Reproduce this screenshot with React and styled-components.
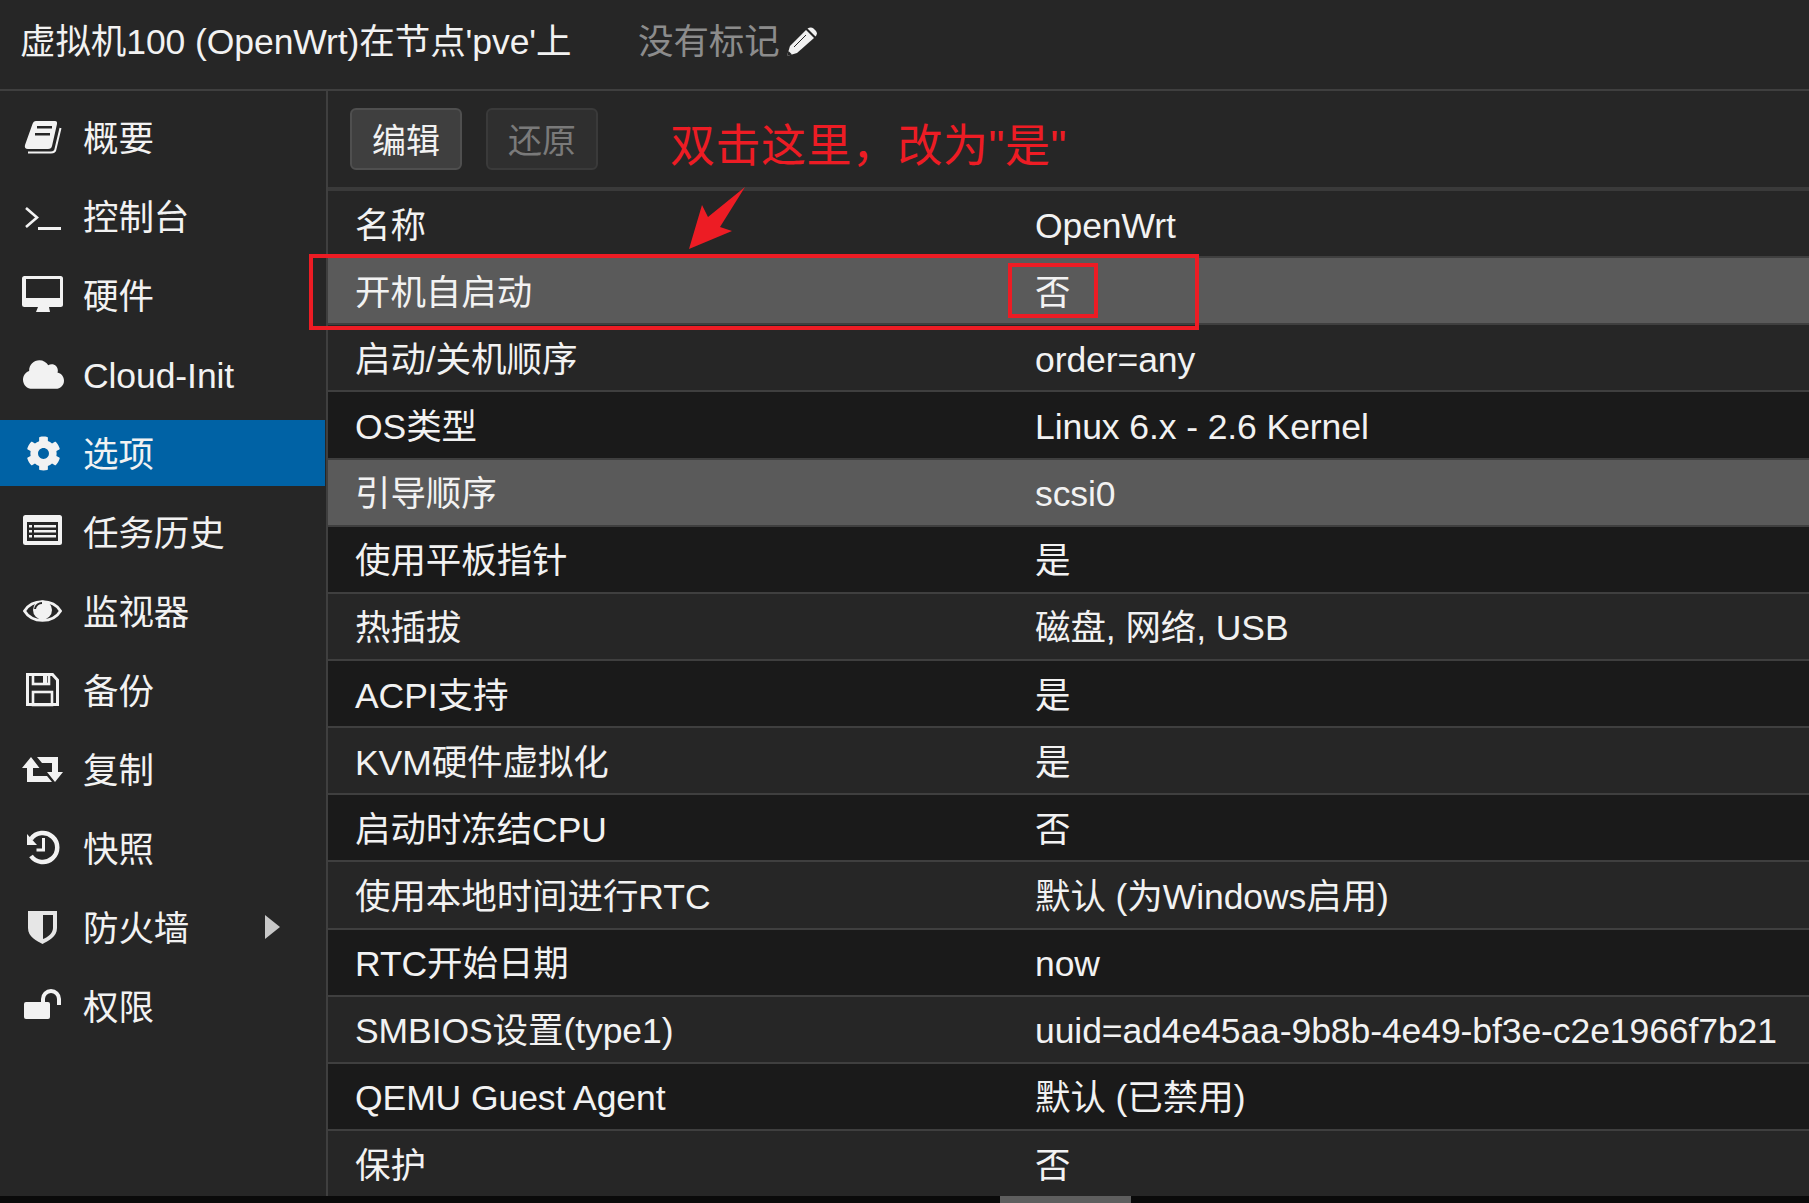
import React from "react";
import styled, { createGlobalStyle } from "styled-components";
import { FaCloud, FaCog } from "react-icons/fa";

const DARK = "#262626";
const LIGHT = "#f2f2f2";

const Svg = ({ children }) => (
  <svg width="42" height="42" viewBox="0 0 42 42" fill={LIGHT}>
    {children}
  </svg>
);

const BookIcon = () => (
  <Svg>
    <path d="M14 5 H33 Q35.5 5 35 8 L30 30 Q29.5 33 26 33 H6 Q2 33 3 29 L10.5 8 Q11.5 5 14 5 Z" />
    <path d="M38.5 12 L33.5 33 Q33 36.5 29 36.5 H6" fill="none" stroke={LIGHT} strokeWidth="2" />
    <rect x="15" y="10" width="15" height="2.5" fill={DARK} />
    <rect x="13" y="17" width="15" height="2.5" fill={DARK} />
  </Svg>
);

const TerminalIcon = () => (
  <Svg>
    <polyline points="4,13 15,22.5 4,32" fill="none" stroke={LIGHT} strokeWidth="2.6" />
    <rect x="16" y="32" width="23" height="3" />
  </Svg>
);

const DesktopIcon = () => (
  <Svg>
    <rect x="0" y="2" width="41" height="31" rx="2.5" />
    <rect x="4" y="5" width="34" height="19" fill={DARK} />
    <polygon points="16,33 27,33 28,38 14,38" />
  </Svg>
);

const ListIcon = () => (
  <Svg>
    <rect x="1" y="4" width="39" height="30" rx="2.5" />
    <rect x="5" y="11" width="31" height="19" fill={DARK} />
    <rect x="7" y="14" width="3" height="2.5" />
    <rect x="7" y="19" width="3" height="2.5" />
    <rect x="7" y="24" width="3" height="2.5" />
    <rect x="12" y="14" width="22" height="2.5" />
    <rect x="12" y="19" width="22" height="2.5" />
    <rect x="12" y="24" width="22" height="2.5" />
  </Svg>
);

const EyeIcon = () => (
  <Svg>
    <path d="M2.5 21 C10 8.5 31 8.5 38.5 21 C31 33.5 10 33.5 2.5 21 Z" fill="none" stroke={LIGHT} strokeWidth="2.8" />
    <circle cx="20.5" cy="20" r="9.5" />
    <path d="M13 19 C13.5 15 17 13 20 13" fill="none" stroke={DARK} strokeWidth="2" />
  </Svg>
);

const SaveIcon = () => (
  <Svg>
    <path d="M5.5 5.5 H30.5 L35.5 11 V35.5 H5.5 Z" fill="none" stroke={LIGHT} strokeWidth="3" />
    <rect x="11" y="5.5" width="16" height="9.5" fill="none" stroke={LIGHT} strokeWidth="2.6" />
    <rect x="21" y="7" width="4" height="7" />
    <rect x="11" y="23" width="19" height="13" fill="none" stroke={LIGHT} strokeWidth="2.6" />
  </Svg>
);

const RetweetIcon = () => (
  <Svg>
    <polygon points="9,9 17.5,20 11,20 11,28 25,28 30,34 5,34 5,20 0,20" />
    <polygon points="15,9 36,9 36,24 41,24 33,34 25,24 30,24 30,15 20,15" />
  </Svg>
);

const HistoryIcon = () => (
  <Svg>
    <path d="M9 12 A14.5 14.5 0 1 1 9 29" fill="none" stroke={LIGHT} strokeWidth="4.5" />
    <polygon points="5,7 5,18 15,18" />
    <polyline points="21.5,11 21.5,23 14.5,23" fill="none" stroke={LIGHT} strokeWidth="3" />
  </Svg>
);

const ShieldIcon = () => (
  <Svg>
    <path d="M6 5 H35 V22 C35 31 26 35 20.5 38 C15 35 6 31 6 22 Z" fill="#e6e6e6" />
    <path d="M21 9 H31 V22 C31 27 26 31 21 33 Z" fill={DARK} />
  </Svg>
);

const UnlockIcon = () => (
  <Svg>
    <rect x="2" y="17" width="26" height="17" rx="2" />
    <path d="M21 18 V14 A8 8 0 0 1 37 14 V20" fill="none" stroke={LIGHT} strokeWidth="4" />
  </Svg>
);

const PencilIcon = () => (
  <svg width="31" height="30" viewBox="0 0 31 30">
    <polygon points="1,29 4,19 20,3 28,11 11,26" fill={LIGHT} />
    <path d="M21.5 1.5 Q25 -0.5 27.5 1.5 L30 4 Q32 7 29.5 9.5 Z" fill={LIGHT} />
    <line x1="8" y1="20" x2="20" y2="8" stroke={DARK} strokeWidth="1" />
    <polygon points="1,29 2.5,24 6,27.5" fill={DARK} />
  </svg>
);

const navItems = [
  { label: "概要", icon: <BookIcon /> },
  { label: "控制台", icon: <TerminalIcon /> },
  { label: "硬件", icon: <DesktopIcon /> },
  { label: "Cloud-Init", icon: <FaCloud size={41} /> },
  { label: "选项", icon: <FaCog size={35} />, active: true },
  { label: "任务历史", icon: <ListIcon /> },
  { label: "监视器", icon: <EyeIcon /> },
  { label: "备份", icon: <SaveIcon /> },
  { label: "复制", icon: <RetweetIcon /> },
  { label: "快照", icon: <HistoryIcon /> },
  { label: "防火墙", icon: <ShieldIcon />, arrow: true },
  { label: "权限", icon: <UnlockIcon /> }
];

const rows = [
  ["名称", "OpenWrt"],
  ["开机自启动", "否", true],
  ["启动/关机顺序", "order=any"],
  ["OS类型", "Linux 6.x - 2.6 Kernel"],
  ["引导顺序", "scsi0", true],
  ["使用平板指针", "是"],
  ["热插拔", "磁盘, 网络, USB"],
  ["ACPI支持", "是"],
  ["KVM硬件虚拟化", "是"],
  ["启动时冻结CPU", "否"],
  ["使用本地时间进行RTC", "默认 (为Windows启用)"],
  ["RTC开始日期", "now"],
  ["SMBIOS设置(type1)", "uuid=ad4e45aa-9b8b-4e49-bf3e-c2e1966f7b21"],
  ["QEMU Guest Agent", "默认 (已禁用)"],
  ["保护", "否"]
];

const App = () => {
  return (
    <>
      <GlobalStyle />
      <Page>
        <Header>
          <Title>虚拟机100 (OpenWrt)在节点'pve'上</Title>
          <Tags>没有标记</Tags>
          <PencilIcon />
        </Header>
        <Main>
          <Sidebar>
            {navItems.map(item => (
              <NavItem key={item.label} active={item.active}>
                <NavIcon>{item.icon}</NavIcon>
                <NavLabel>{item.label}</NavLabel>
                {item.arrow && <NavArrow />}
              </NavItem>
            ))}
          </Sidebar>
          <Content>
            <Toolbar>
              <ToolButton>编辑</ToolButton>
              <ToolButton disabled>还原</ToolButton>
            </Toolbar>
            <Table>
              {rows.map(([name, value, hover], i) => (
                <Row key={name} dark={i % 2 === 1} hover={hover}>
                  <NameCell>{name}</NameCell>
                  <div>{value}</div>
                </Row>
              ))}
            </Table>
          </Content>
        </Main>
        <ScrollStrip>
          <ScrollThumb />
        </ScrollStrip>
        <Note>双击这里，改为"是"</Note>
        <NoteArrow width="70" height="75" viewBox="0 0 70 75">
          <polygon points="61,2 36,42 48,46 5,64 18,20 24,32" fill="#ed1c24" />
        </NoteArrow>
        <RowMark />
        <ValueMark />
      </Page>
    </>
  );
};

const GlobalStyle = createGlobalStyle`
  html, body {
    margin: 0;
    padding: 0;
    background: #0a0a0a;
  }
`;

const Page = styled.div`
  position: relative;
  width: 1809px;
  height: 1203px;
  overflow: hidden;
  display: flex;
  flex-direction: column;
  background: #262626;
  color: #f2f2f2;
  font-family: "Liberation Sans", "Noto Sans CJK SC", sans-serif;
  font-size: 35.5px;
  line-height: 40px;
  letter-spacing: -0.08px;
`;

const Header = styled.div`
  height: 91px;
  flex: none;
  box-sizing: border-box;
  display: flex;
  align-items: center;
  padding: 0 0 5px 20px;
  border-bottom: 2px solid #3f3f3f;
`;

const Title = styled.div`
  width: 618px;
`;

const Tags = styled.div`
  color: #8c8c8c;
  margin-right: 6px;
`;

const Main = styled.div`
  flex: 1;
  min-height: 0;
  display: flex;
`;

const Sidebar = styled.div`
  width: 326px;
  flex: none;
  padding-top: 13px;
  display: flex;
  flex-direction: column;
  gap: 13px;
  border-right: 2px solid #3f3f3f;
`;

const NavItem = styled.div`
  height: 66px;
  flex: none;
  margin-right: 1px;
  display: flex;
  align-items: center;
  padding-left: 22px;
  background: ${props => (props.active ? "#0062a5" : "transparent")};
`;

const NavIcon = styled.span`
  width: 42px;
  margin-right: 19px;
  display: flex;
  justify-content: center;
`;

const NavLabel = styled.span`
  padding-top: 3px;
`;

const NavArrow = styled.span`
  margin-left: auto;
  margin-right: 45px;
  border-left: 15px solid #c8c8c8;
  border-top: 12.5px solid transparent;
  border-bottom: 12.5px solid transparent;
`;

const Content = styled.div`
  flex: 1;
  min-width: 0;
  display: flex;
  flex-direction: column;
`;

const Toolbar = styled.div`
  height: 100px;
  flex: none;
  box-sizing: border-box;
  display: flex;
  gap: 24px;
  padding: 17px 0 0 22px;
  border-bottom: 4px solid #3a3a3a;
`;

const ToolButton = styled.div`
  width: 112px;
  height: 62px;
  box-sizing: border-box;
  display: flex;
  align-items: center;
  justify-content: center;
  padding-top: 3px;
  border-radius: 6px;
  font-size: 34px;
  background: ${props => (props.disabled ? "#2f2f2f" : "#3f3f3f")};
  border: 2px solid ${props => (props.disabled ? "#3a3a3a" : "#4f4f4f")};
  color: ${props => (props.disabled ? "#7a7a7a" : "#f2f2f2")};
`;

const Table = styled.div`
  flex: 1;
  min-height: 0;
  display: flex;
  flex-direction: column;
`;

const Row = styled.div`
  flex: 1;
  min-height: 0;
  box-sizing: border-box;
  display: flex;
  align-items: center;
  padding: 4px 0 0 27px;
  border-bottom: 2px solid #3f3f3f;
  background: ${props =>
    props.hover ? "#5a5a5a" : props.dark ? "#1a1a1a" : "#262626"};
  &:last-child {
    border-bottom: none;
  }
`;

const NameCell = styled.div`
  width: 680px;
  flex: none;
`;

const ScrollStrip = styled.div`
  height: 7px;
  flex: none;
  background: #0a0a0a;
`;

const ScrollThumb = styled.div`
  width: 131px;
  height: 7px;
  margin-left: 1000px;
  background: #5e5e5e;
`;

const Note = styled.div`
  position: absolute;
  left: 670px;
  top: 119px;
  font-size: 45px;
  line-height: 56px;
  letter-spacing: 0.5px;
  color: #ed1c24;
  white-space: nowrap;
`;

const NoteArrow = styled.svg`
  position: absolute;
  left: 684px;
  top: 185px;
`;

const RowMark = styled.div`
  position: absolute;
  left: 309px;
  top: 254px;
  width: 890px;
  height: 76px;
  box-sizing: border-box;
  border: 4px solid #ed1c24;
`;

const ValueMark = styled.div`
  position: absolute;
  left: 1008px;
  top: 263px;
  width: 90px;
  height: 55px;
  box-sizing: border-box;
  border: 4px solid #ed1c24;
`;

export default App;
